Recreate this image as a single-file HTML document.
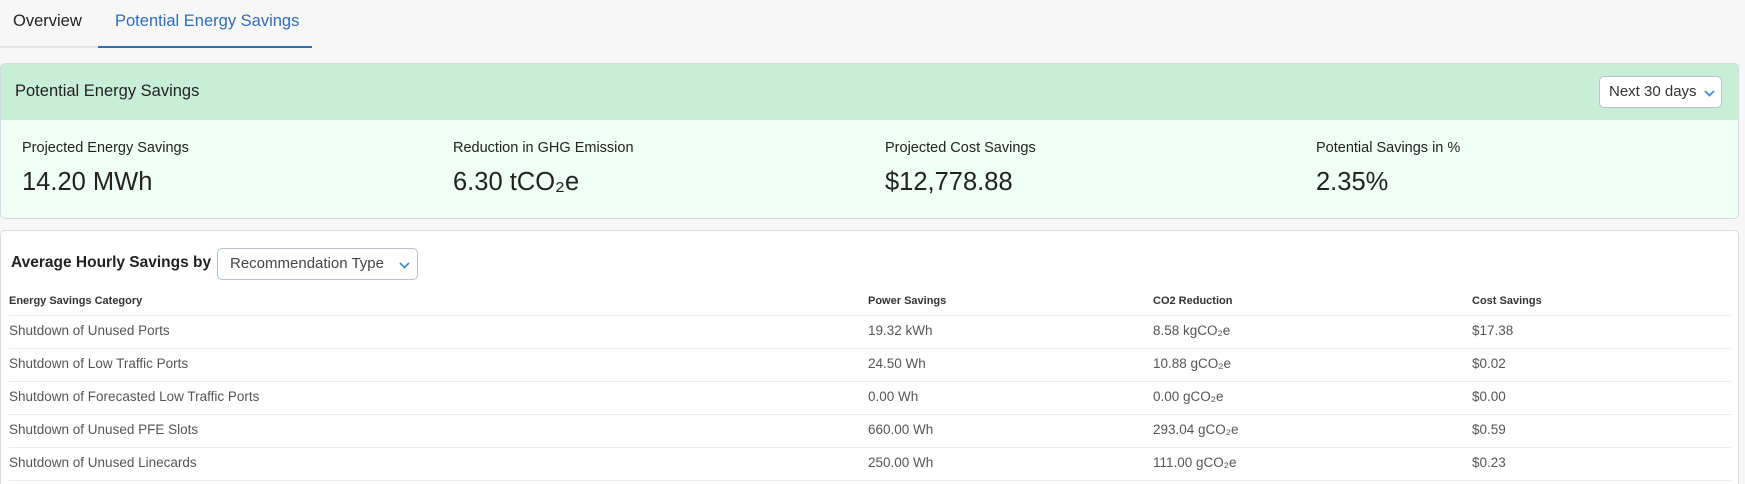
<!DOCTYPE html>
<html style="width:1745px;height:484px;overflow:hidden"><head><meta charset="utf-8"><style>
*{box-sizing:border-box;margin:0;padding:0}
body{width:1745px;height:484px;background:#f7f7f7;font-family:"Liberation Sans",sans-serif;color:#222;position:relative;overflow:hidden}
.abs{position:absolute;white-space:nowrap}
.tab{font-size:16.5px;top:12px}
.card1{position:absolute;left:0;top:63px;width:1739px;height:156px;border:1px solid #d3dbe0;border-radius:5px;overflow:hidden;background:#effff5}
.hdr{height:56px;background:#c8eed8;position:relative}
.dd{position:absolute;background:#fff;border:1px solid #b9c2cc;border-radius:5px;font-size:15px;color:#333}
.lbl{font-size:14.5px;color:#222}
.val{font-size:25.5px;color:#222}
.card2{position:absolute;left:0;top:230px;width:1739px;height:254px;border:1px solid #d3dbe0;border-bottom:none;border-radius:5px 5px 0 0;background:#fff}
.th{font-size:11px;font-weight:bold;color:#333;top:64px}
.row{position:absolute;left:8px;width:1722px;height:1px;background:#e6ebef}
.td{font-size:13.5px;color:#555}
</style></head><body>
<div class="abs tab" style="left:13px;color:#222">Overview</div>
<div class="abs tab" style="left:115px;color:#2f6db5">Potential Energy Savings</div>
<div class="abs" style="left:0;top:46px;width:98px;height:2px;background:#e1e5ea"></div>
<div class="abs" style="left:98px;top:46px;width:214px;height:2px;background:#2f6db5"></div>

<div class="card1">
 <div class="hdr">
  <div class="abs" style="left:14px;top:18px;font-size:16.5px;color:#222">Potential Energy Savings</div>
  <div class="dd" style="left:1598px;top:12px;width:123px;height:32px">
   <span class="abs" style="left:9px;top:6px">Next 30 days</span>
   <svg class="abs" style="left:104px;top:13px" width="11" height="7" viewBox="0 0 11 7"><path d="M1 1l4.5 4.5 4.5-4.5" fill="none" stroke="#3d8fdc" stroke-width="1.8"/></svg>
  </div>
 </div>
 <div class="abs lbl" style="left:21px;top:76px">Projected Energy Savings</div>
 <div class="abs val" style="left:21px;top:104px">14.20 MWh</div>
 <div class="abs lbl" style="left:452px;top:76px">Reduction in GHG Emission</div>
 <div class="abs val" style="left:452px;top:104px">6.30 tCO₂e</div>
 <div class="abs lbl" style="left:884px;top:76px">Projected Cost Savings</div>
 <div class="abs val" style="left:884px;top:104px">$12,778.88</div>
 <div class="abs lbl" style="left:1315px;top:76px">Potential Savings in %</div>
 <div class="abs val" style="left:1315px;top:104px">2.35%</div>
</div>

<div class="card2">
 <div class="abs" style="left:10px;top:23px;font-size:15.5px;font-weight:bold;color:#222">Average Hourly Savings by</div>
 <div class="dd" style="left:216px;top:17px;width:201px;height:32px">
  <span class="abs" style="left:12px;top:6px;color:#444">Recommendation Type</span>
  <svg class="abs" style="left:181px;top:13px" width="11" height="7" viewBox="0 0 11 7"><path d="M1 1l4.5 4.5 4.5-4.5" fill="none" stroke="#3d8fdc" stroke-width="1.8"/></svg>
 </div>
 <div class="abs th" style="left:8px">Energy Savings Category</div>
 <div class="abs th" style="left:867px">Power Savings</div>
 <div class="abs th" style="left:1152px">CO2 Reduction</div>
 <div class="abs th" style="left:1471px">Cost Savings</div>
 <div class="row" style="top:84px"></div>
 <div class="row" style="top:117px"></div>
 <div class="row" style="top:150px"></div>
 <div class="row" style="top:183px"></div>
 <div class="row" style="top:216px"></div>
 <div class="row" style="top:249px"></div>

 <div class="abs td" style="left:8px;top:92px">Shutdown of Unused Ports</div>
 <div class="abs td" style="left:867px;top:92px">19.32 kWh</div>
 <div class="abs td" style="left:1152px;top:92px">8.58 kgCO₂e</div>
 <div class="abs td" style="left:1471px;top:92px">$17.38</div>

 <div class="abs td" style="left:8px;top:125px">Shutdown of Low Traffic Ports</div>
 <div class="abs td" style="left:867px;top:125px">24.50 Wh</div>
 <div class="abs td" style="left:1152px;top:125px">10.88 gCO₂e</div>
 <div class="abs td" style="left:1471px;top:125px">$0.02</div>

 <div class="abs td" style="left:8px;top:158px">Shutdown of Forecasted Low Traffic Ports</div>
 <div class="abs td" style="left:867px;top:158px">0.00 Wh</div>
 <div class="abs td" style="left:1152px;top:158px">0.00 gCO₂e</div>
 <div class="abs td" style="left:1471px;top:158px">$0.00</div>

 <div class="abs td" style="left:8px;top:191px">Shutdown of Unused PFE Slots</div>
 <div class="abs td" style="left:867px;top:191px">660.00 Wh</div>
 <div class="abs td" style="left:1152px;top:191px">293.04 gCO₂e</div>
 <div class="abs td" style="left:1471px;top:191px">$0.59</div>

 <div class="abs td" style="left:8px;top:224px">Shutdown of Unused Linecards</div>
 <div class="abs td" style="left:867px;top:224px">250.00 Wh</div>
 <div class="abs td" style="left:1152px;top:224px">111.00 gCO₂e</div>
 <div class="abs td" style="left:1471px;top:224px">$0.23</div>
</div>
</body></html>
